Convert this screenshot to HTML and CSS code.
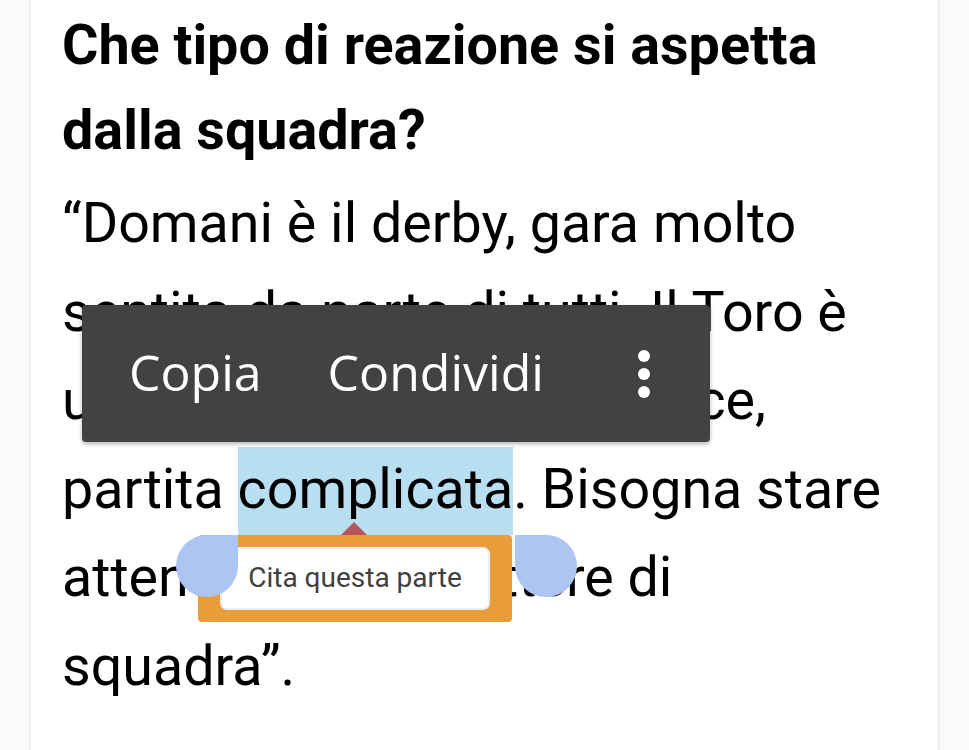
FILE: index.html
```html
<!DOCTYPE html>
<html lang="it">
<head>
<meta charset="utf-8">
<title>Intervista</title>
<link rel="stylesheet" href="styles.css">
</head>
<body>
<main class="page">
  <article class="card">
    <h2 class="question">Che tipo di reazione si aspetta<br>dalla squadra?</h2>
    <p class="answer">“Domani è il derby, gara molto<br>sentito da parte di tutti. Il Toro è<br>una squadra solida e tenace,<br>partita <span class="selected">complicata</span>. Bisogna stare<br>attenti, avere carattere di<br>squadra”.</p>
  </article>

  <div class="toolbar">
    <span class="tool">Copia</span>
    <span class="tool">Condividi</span>
    <span class="more"><i></i><i></i><i></i></span>
  </div>

  <div class="quote-pop">
    <span class="quote-arrow"></span>
    <button class="quote-btn">Cita questa parte</button>
  </div>
  <span class="handle handle-left"></span>
  <span class="handle handle-right"></span>
</main>
</body>
</html>
```

FILE: styles.css
```css
* { box-sizing: border-box; }
html, body { margin: 0; padding: 0; }
body {
  background: #fafafa;
  font-family: Roboto, "Liberation Sans", sans-serif;
  color: #000;
  width: 969px;
  height: 750px;
  overflow: hidden;
}
.page {
  position: relative;
  height: 750px;
}
.card {
  margin-left: 29px;
  width: 911px;
  height: 750px;
  background: #fff;
  border-left: 2px solid #eeeeee;
  border-right: 2px solid #eeeeee;
  padding: 3px 0 0 31px;
}
.question {
  margin: 0;
  font-size: 55.7px;
  font-weight: 700;
  line-height: 85px;
}
.answer {
  margin: 6px 0 0;
  font-size: 55.6px;
  font-weight: 400;
  line-height: 88.5px;
}
.selected {
  background: #b8def2;
  padding: 9px 0 13px;
}

.toolbar {
  position: absolute;
  left: 82px;
  top: 305px;
  width: 628px;
  height: 137px;
  background: #424242;
  border-radius: 4px;
  box-shadow: 0 2px 4px rgba(0,0,0,0.3);
  display: flex;
  align-items: center;
  padding-left: 47px;
  font-family: "Open Sans", "Noto Sans", sans-serif;
  color: #fff;
}
.tool {
  font-size: 50px;
  font-weight: 500;
  line-height: 1;
  margin-right: 66px;
  padding-bottom: 4px;
}
.more {
  margin-left: auto;
  margin-right: 60px;
  display: flex;
  flex-direction: column;
  gap: 6px;
}
.more i {
  display: block;
  width: 12px;
  height: 12px;
  border-radius: 50%;
  background: #fff;
}

.quote-pop {
  position: absolute;
  left: 198px;
  top: 535px;
  width: 314px;
  height: 87px;
  background: #e99c3a;
  border-radius: 4px;
  padding: 12px 22px;
}
.quote-arrow {
  position: absolute;
  left: 143px;
  top: -13px;
  width: 0;
  height: 0;
  border-left: 13px solid transparent;
  border-right: 13px solid transparent;
  border-bottom: 13px solid #b4545b;
}
.quote-btn {
  display: block;
  width: 270px;
  height: 63px;
  background: #fff;
  border: 2px solid #eeeeee;
  border-radius: 7px;
  font-family: Roboto, "Liberation Sans", sans-serif;
  font-size: 28px;
  color: #404040;
  padding: 0 0 2px;
}
.handle {
  position: absolute;
  z-index: 2;
  top: 535px;
  width: 62px;
  height: 62px;
  background: #adc5f3;
}
.handle-left {
  left: 176px;
  border-radius: 50% 0 50% 50%;
}
.handle-right {
  left: 515px;
  border-radius: 0 50% 50% 50%;
}
```
